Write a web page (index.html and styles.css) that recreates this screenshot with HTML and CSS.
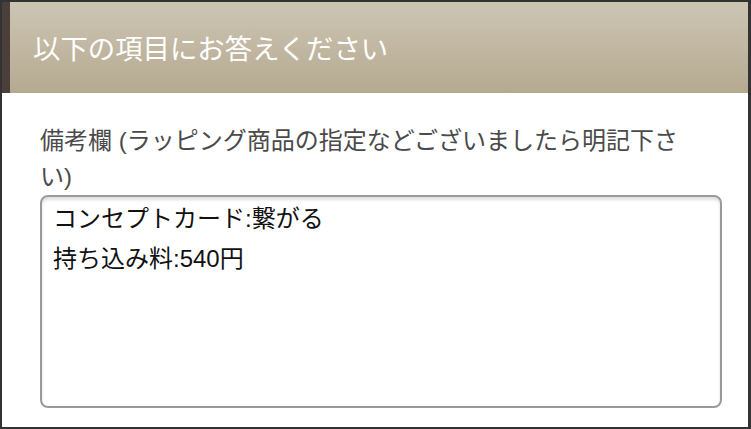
FILE: index.html
```html
<!DOCTYPE html>
<html lang="ja">
<head>
    <meta charset="UTF-8">
    <meta name="viewport" content="width=device-width, initial-scale=1.0">
    <title>以下の項目にお答えください</title>
    <link rel="stylesheet" href="styles.css">
</head>
<body>
    <div class="frame">
        <div class="header">
            <h1>以下の項目にお答えください</h1>
        </div>
        <div class="content">
            <label class="label" for="note">備考欄 (ラッピング商品の指定などございましたら明記下さい)</label>
            <textarea class="note" id="note">コンセプトカード:繋がる
持ち込み料:540円</textarea>
        </div>
    </div>
</body>
</html>
```

FILE: styles.css
```css
html, body {
    margin: 0;
    padding: 0;
}
body {
    font-family: "Liberation Sans", "Noto Sans CJK JP", sans-serif;
    background: #333;
}
.frame {
    box-sizing: border-box;
    width: 751px;
    height: 429px;
    border: 2px solid #333;
    border-right-width: 3px;
    background: white;
    overflow: hidden;
}
.header {
    height: 91px;
    border-left: 8px solid #4a4039;
    background: linear-gradient(to bottom, #cdc5b4, #b5a990);
    display: flex;
    align-items: center;
    padding-left: 23px;
}
.header h1 {
    margin: 0 0 2px;
    color: white;
    font-size: 27.4px;
    font-weight: normal;
}
.content {
    padding: 30px 27px 0 38px;
}
.label {
    display: block;
    width: 650px;
    color: #4a4a4a;
    font-size: 24px;
    line-height: 36px;
}
.note {
    display: block;
    box-sizing: border-box;
    width: 682px;
    height: 213px;
    border: 2px solid #9a9a9a;
    border-radius: 8px;
    box-shadow: inset 0 3px 3px rgba(0, 0, 0, 0.12);
    padding: 2px 11px;
    font-family: "Liberation Sans", "Noto Sans CJK JP", sans-serif;
    font-size: 24px;
    line-height: 40px;
    color: #111;
    resize: none;
    outline: none;
}
```
